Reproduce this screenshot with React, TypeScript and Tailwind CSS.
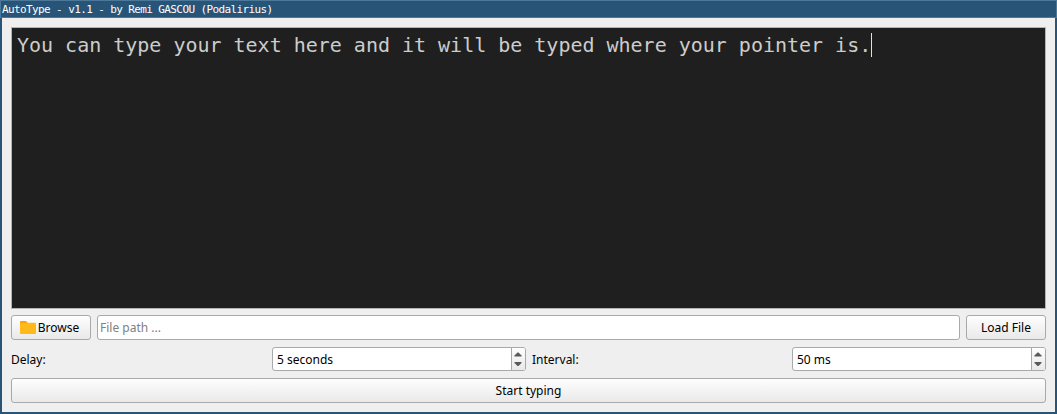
import React from "react";

const buttonClass =
  "flex h-[25px] items-center justify-center rounded-[3px] border border-[#a9a9a9] bg-linear-to-b from-[#fefefe] to-[#e9e9e9] whitespace-pre";

function FolderIcon() {
  return (
    <svg width="16" height="13" viewBox="0 0 16 13" className="mr-[2px] shrink-0">
      <path d="M0 11.5V1Q0 0 1 0H5.5Q6.2 0 6.8 .8L8 2.3V6H0Z" fill="#ffa000" />
      <path d="M0 3Q0 1.7 1 1.7H15Q16 1.7 16 2.7V12Q16 13 15 13H1Q0 13 0 12Z" fill="#ffb91b" />
    </svg>
  );
}

function SpinBox({ value }: { value: string }) {
  return (
    <div className="flex h-6 w-[254px] overflow-hidden rounded-[3px] border border-[#a9a9a9] bg-white">
      <div className="flex flex-1 items-center pt-px pl-1">{value}</div>
      <div className="w-[14px] border-l border-[#a9a9a9] bg-linear-to-b from-[#fefefe] to-[#e9e9e9]">
        <svg width="13" height="22" viewBox="0 0 13 22" fill="#5a5a5a">
          <path d="M5.5 4.5H6.5L9.5 7.5V8.5H2.5V7.5Z" />
          <path d="M2.5 14H9.5V15L6.5 18H5.5L2.5 15Z" />
        </svg>
      </div>
    </div>
  );
}

export default function App() {
  return (
    <div className="flex h-[414px] w-[1057px] flex-col bg-[#285577] font-['Noto_Sans',sans-serif] text-[12px] leading-4 text-black">
      <header className="h-[18px] border border-[#4c7899] pt-px pl-px font-['DejaVu_Sans_Mono',monospace] text-[11px] leading-4 tracking-[-0.61px] whitespace-pre text-white">
        AutoType - v1.1 - by Remi GASCOU (Podalirius)
      </header>
      <main className="mx-[2px] mb-[2px] flex flex-1 flex-col bg-[#efefef] px-[9px] pt-[9px]">
        <div className="flex h-[282px] items-start border border-[#b4b4b4] bg-[#1f1f1f] pt-[5px] pl-[5px] font-['DejaVu_Sans_Mono',monospace] text-[20px] leading-6 whitespace-pre text-[#cccccc]">
          <span className="tracking-[-0.01px]">You can type your text here and it will be typed where your pointer is.</span>
          <span className="h-6 w-px bg-[#e0e0e0]" />
        </div>
        <div className="mt-[6px] flex gap-[6px]">
          <div className={`${buttonClass} w-20 pr-[3px]`}>
            <FolderIcon />
            Browse
          </div>
          <div className="flex h-[25px] flex-1 items-center rounded-[3px] border border-[#a9a9a9] bg-white pl-[2px] text-[#808080]">
            File path ...
          </div>
          <div className={`${buttonClass} w-20`}>Load File</div>
        </div>
        <div className="mt-[7px] flex items-center">
          <span className="w-[261px] pt-px">Delay:</span>
          <SpinBox value="5 seconds" />
          <span className="w-[266px] pt-px pl-[6px]">Interval:</span>
          <SpinBox value="50 ms" />
        </div>
        <div className={`${buttonClass} mt-[7px]`}>Start typing</div>
      </main>
    </div>
  );
}
